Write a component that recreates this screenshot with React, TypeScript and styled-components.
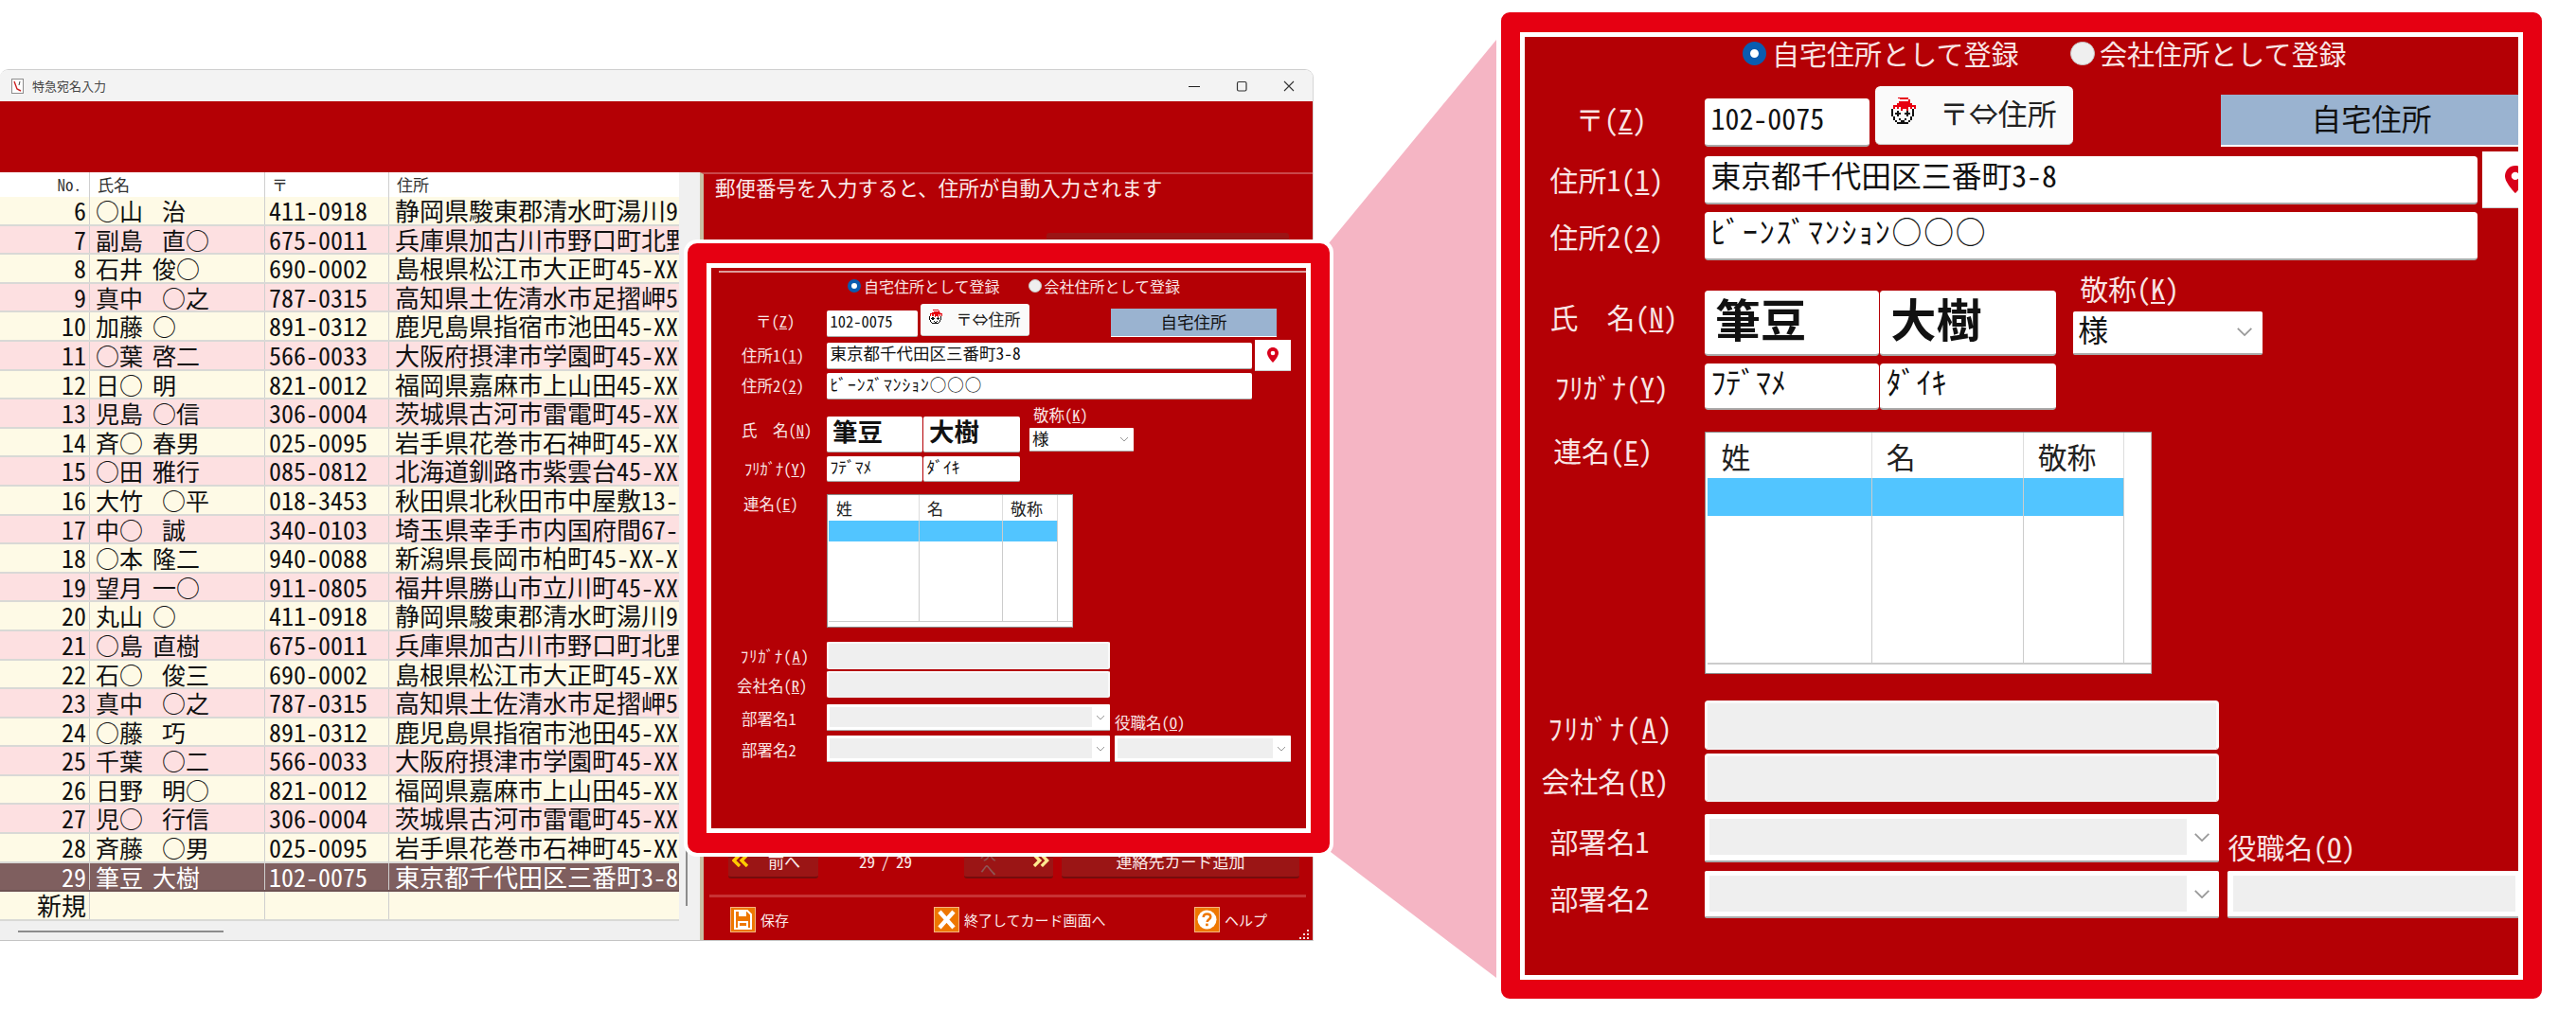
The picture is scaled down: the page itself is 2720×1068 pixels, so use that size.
import React from "react";
import styled, { createGlobalStyle } from "styled-components";

const u = (n: number) => `calc(var(--u) * ${n})`;

const Global = createGlobalStyle`
  html, body { margin: 0; padding: 0; background: #fff; }
  body { width: 2720px; height: 1068px; overflow: hidden; font-family: "Noto Sans CJK JP", "Noto Sans", sans-serif; font-feature-settings: "hwid" 1; }
  * { box-sizing: border-box; }
`;

const Page = styled.div`
  position: relative;
  width: 2720px;
  height: 1068px;
  padding-top: 73px;
`;

/* ---------- window ---------- */
const Window = styled.div`
  width: 1387px;
  height: 921px;
  display: flex;
  flex-direction: column;
  border-radius: 9px 9px 0 0;
  overflow: hidden;
  border-top: 1px solid #cfcfcf;
  border-right: 1px solid #d6d6d6;
  border-bottom: 1px solid #c4c4c4;
`;
const TitleBar = styled.div`
  height: 33px;
  flex: none;
  background: #f3f3f3;
  display: flex;
  align-items: center;
  padding-left: 12px;
`;
const TitleText = styled.span`
  margin-left: 9px;
  font-size: 13px;
  color: #444;
`;
const WinControls = styled.div`
  margin-left: auto;
  padding-right: 19px;
  display: flex;
  gap: 38px;
  align-items: center;
`;
const RedBand = styled.div`
  height: 75px;
  flex: none;
  background: #b40005;
`;
const Body = styled.div`
  flex: 1;
  min-height: 0;
  display: flex;
`;
const LeftPane = styled.div`
  width: 739px;
  flex: none;
  display: flex;
  flex-direction: column;
  background: #f0f0f0;
`;
const TableArea = styled.div`
  flex: 1;
  display: flex;
  min-height: 0;
`;
const TableBox = styled.div`
  width: 717px;
  flex: none;
  overflow: hidden;
  background: #fff;
  height: 791px;
`;
const gridCols = "94px 1px 184px 1px 130px 1px 306px";
const HeadRow = styled.div`
  display: grid;
  grid-template-columns: ${gridCols};
  height: 26px;
  background: #fff;
  font-size: 17px;
  color: #333;
  line-height: 26px;
`;
const Row = styled.div<{ $tone: "cream" | "pink" | "sel" }>`
  display: grid;
  grid-template-columns: ${gridCols};
  height: 30.6px;
  font-size: 26px;
  line-height: 28px;
  white-space: pre;
  overflow: hidden;
  color: ${(p) => (p.$tone === "sel" ? "#fff" : "#111")};
  background: ${(p) => (p.$tone === "cream" ? "#fefae6" : p.$tone === "pink" ? "#fde0e1" : "#7f5f5f")};
  border-bottom: 2px solid ${(p) => (p.$tone === "sel" ? "#6d5252" : "#d9d9d6")};
`;
const Sep = styled.div`
  background: #cfcfcf;
`;
const NoCell = styled.div<{ $head?: boolean }>`
  text-align: right;
  padding-right: ${(p) => (p.$head ? 8 : 3)}px;
`;
const NameCell = styled.div<{ $head?: boolean }>`
  padding-left: ${(p) => (p.$head ? 8 : 6)}px;
  font-size: ${(p) => (p.$head ? 17 : 25)}px;
  word-spacing: -0.1em;
  overflow: hidden;
`;
const ZipCell = styled.div<{ $head?: boolean }>`
  padding-left: ${(p) => (p.$head ? 7 : 4)}px;
`;
const AddrCell = styled.div<{ $head?: boolean }>`
  padding-left: ${(p) => (p.$head ? 8 : 6)}px;
  overflow: hidden;
`;
const VScroll = styled.div`
  flex: 1;
  display: flex;
  justify-content: center;
  align-items: flex-end;
  padding: 0 6px 16px 0;
`;
const VThumb = styled.div`
  width: 2px;
  height: 400px;
  background: #8c8c8c;
`;
const HScroll = styled.div`
  height: 20px;
  flex: none;
  padding: 10px 0 0 19px;
  background: #f0f0f0;
`;
const HThumb = styled.div`
  width: 217px;
  height: 2px;
  background: #8c8c8c;
`;

/* ---------- right panel ---------- */
const Panel = styled.div`
  flex: 1;
  position: relative;
  display: flex;
  flex-direction: column;
  background: #b40005;
  border-left: 4px solid #c9c0a4;
  border-top: 2px solid #c9474a;
`;
const HelpLine = styled.div`
  height: 29px;
  padding-left: 12px;
  flex: none;
  font-size: 21.5px;
  line-height: 27px;
  color: #fbeaea;
`;
const TopButton = styled.div`
  margin: 33px 0 0 362px;
  width: 256px;
  height: 36px;
  flex: none;
  background: #9b1515;
  border-radius: 3px;
`;
const Spacer = styled.div`
  flex: 1;
`;
const NavRow = styled.div`
  flex: none;
  height: 36px;
  display: grid;
  grid-template-columns: 95px 154px 94px 260px;
  padding-left: 26px;
  color: #fbeaea;
  font-size: 17px;
`;
const NavButton = styled.div<{ $wide?: boolean; $dim?: boolean }>`
  background: #9b1515;
  border-bottom: 2px solid #760c0c;
  border-radius: 3px;
  display: flex;
  align-items: center;
  justify-content: ${(p) => (p.$wide ? "center" : "flex-start")};
  gap: ${(p) => (p.$dim ? 22 : 20)}px;
  padding: 4px 4px 0 ${(p) => (p.$dim ? 17 : 4)}px;
  margin-left: ${(p) => (p.$wide ? 9 : 0)}px;
  width: ${(p) => (p.$wide ? "251px" : "auto")};
  color: ${(p) => (p.$dim ? "#8f5656" : "#fbeaea")};
  line-height: 1;
`;
const Counter = styled.div`
  display: flex;
  justify-content: center;
  padding: 13px 12px 0 0;
  line-height: 1;
  word-spacing: -0.1em;
`;
const PanelRule = styled.div`
  flex: none;
  height: 3px;
  margin: 21px 7px 0 6px;
  background: #c83234;
`;
const Footer = styled.div`
  flex: none;
  height: 45px;
  display: grid;
  grid-template-columns: 215px 275px auto;
  padding: 10px 0 0 28px;
  color: #fbeaea;
  font-size: 15px;
`;
const FootItem = styled.div`
  display: flex;
  align-items: center;
  gap: 5px;
  height: 27px;
`;
const Tile = styled.div`
  width: 27px;
  height: 27px;
  background: #ee7700;
  border: 1px solid #f6b483;
  display: flex;
  align-items: center;
  justify-content: center;
`;
const Grip = styled.svg`
  position: absolute;
  right: 3px;
  bottom: 1px;
`;

/* ---------- callouts ---------- */
const Ray = styled.svg`
  position: absolute;
  left: 0;
  top: 0;
`;
const Callout = styled.div<{ $big?: boolean }>`
  position: absolute;
  left: ${(p) => (p.$big ? 1580 : 722)}px;
  top: ${(p) => (p.$big ? 8 : 253)}px;
  width: ${(p) => (p.$big ? 1109 : 686)}px;
  height: ${(p) => (p.$big ? 1052 : 652)}px;
  background: #e60012;
  border: ${(p) => (p.$big ? 5 : 4.5)}px solid #fff;
  border-radius: 14px;
  display: flex;
  align-items: center;
  justify-content: center;
`;
const Frame = styled.div`
  border: 5px solid #fff;
  background: #b40005;
  flex: none;
`;
const Viewport = styled.div<{ $scale: number; $w: number; $h: number; $inset?: boolean }>`
  --u: ${(p) => p.$scale}px;
  width: ${(p) => p.$w}px;
  height: ${(p) => p.$h}px;
  overflow: hidden;
  padding: ${(p) => (p.$inset ? "3px 0 0 17.4px" : "0")};
  font-size: ${u(16)};
  color: #f9e4e4;
`;
const Groove = styled.div`
  height: ${u(2)};
  margin: 0 ${u(-40)} ${u(4)} ${u(-9.4)};
  background: #de9c9c;
`;
const FormContent = styled.div`
  width: ${u(600)};
  display: flex;
  flex-direction: column;
`;
const RadioRow = styled.div`
  height: ${u(20)};
  padding-left: ${u(126.6)};
  display: flex;
  align-items: center;
  line-height: 1;
`;
const Radio = styled.span<{ $on?: boolean }>`
  width: ${u(14)};
  height: ${u(14)};
  flex: none;
  border-radius: 50%;
  margin-right: ${u(3)};
  background: ${(p) => (p.$on ? "#fff" : "#efefef")};
  border: ${(p) => (p.$on ? u(4.5) : u(1))} solid ${(p) => (p.$on ? "#0a5cb0" : "#c9c9c9")};
`;
const RadioText = styled.span`
  margin-right: ${u(30)};
`;
const FormRow = styled.div<{ $mt: number; $align?: string }>`
  margin-top: ${(p) => u(p.$mt)};
  display: flex;
  align-items: ${(p) => p.$align ?? "center"};
`;
const Label = styled.div<{ $x: number; $shift?: number; $ls?: number }>`
  width: ${u(104.6)};
  flex: none;
  padding-left: ${(p) => u(p.$x)};
  padding-top: ${(p) => u(Math.max(0, (p.$shift ?? 2) * 2))};
  padding-bottom: ${(p) => u(Math.max(0, -(p.$shift ?? 2) * 2))};
  line-height: 1.2;
  white-space: nowrap;
  letter-spacing: ${(p) => u(p.$ls ?? 0)};
  font-size: ${u(16.5)};
`;
const Field = styled.div<{
  $w: number;
  $h?: number;
  $size?: number;
  $bold?: boolean;
  $disabled?: boolean;
  $ml?: number;
  $ls?: number;
}>`
  width: ${(p) => u(p.$w)};
  height: ${(p) => u(p.$h ?? 28)};
  flex: none;
  margin-left: ${(p) => u(p.$ml ?? 0)};
  background: ${(p) => (p.$disabled ? "#efefef" : "#fff")};
  border-radius: ${u(2)};
  border: ${(p) => (p.$disabled ? `${u(2)} solid #fafafa` : "none")};
  border-bottom: ${u(1.5)} solid ${(p) => (p.$disabled ? "#f2f2f2" : "#aaa")};
  color: #111;
  font-size: ${(p) => u(p.$size ?? 17.5)};
  font-weight: ${(p) => (p.$bold ? 700 : 400)};
  letter-spacing: ${(p) => u(p.$ls ?? 0)};
  padding: 0 0 ${(p) => u(p.$bold ? 6 : 4.5)} ${(p) => u(p.$bold ? 6 : 3.5)};
  display: flex;
  align-items: center;
  line-height: 1;
  white-space: nowrap;
  overflow: hidden;
`;
const ConvertButton = styled.div`
  width: ${u(115)};
  height: ${u(34)};
  flex: none;
  margin: 0 0 ${u(1)} ${u(3)};
  background: #fafafa;
  border-radius: ${u(3)};
  border-bottom: ${u(1)} solid #ccc;
  color: #222;
  font-size: ${u(17)};
  display: flex;
  align-items: center;
  padding: 0 0 ${u(2)} ${u(7)};
  gap: ${u(13)};
  line-height: 1;
`;
const Badge = styled.div`
  width: ${u(175)};
  height: ${u(30)};
  flex: none;
  margin-left: ${u(86)};
  background: #9ab3d0;
  border-bottom: ${u(1.5)} solid #fff;
  color: #111;
  font-size: ${u(17.5)};
  padding-bottom: ${u(2)};
  display: flex;
  align-items: center;
  justify-content: center;
  line-height: 1;
`;
const PinButton = styled.div`
  width: ${u(38)};
  height: ${u(33)};
  flex: none;
  margin-left: ${u(3)};
  background: #fff;
  border-bottom: ${u(1)} solid #ccc;
  display: flex;
  align-items: center;
  justify-content: center;
`;
const NameArea = styled.div`
  margin-top: ${u(6)};
  display: flex;
`;
const NameColumn = styled.div`
  padding-top: ${u(12)};
  display: flex;
  flex-direction: column;
  gap: ${u(4)};
`;
const HonorColumn = styled.div`
  margin-left: ${u(10)};
  display: flex;
  flex-direction: column;
`;
const SideLabel = styled.div<{ $pl?: number }>`
  height: ${u(24)};
  padding-left: ${(p) => u(p.$pl ?? 0)};
  line-height: ${u(20)};
  font-size: ${u(16.5)};
  white-space: nowrap;
`;
const Select = styled.div<{ $w: number; $h: number; $disabled?: boolean }>`
  width: ${(p) => u(p.$w)};
  height: ${(p) => u(p.$h)};
  flex: none;
  background: #fff;
  border-bottom: ${u(1.5)} solid #aaa;
  border-radius: ${u(1)};
  display: flex;
  align-items: center;
  padding: ${u(3)} ${u(5)} ${u(3)} ${u(3)};
  color: #111;
  font-size: ${u(17.5)};
  line-height: 1;
  gap: ${u(4)};
`;
const SelectValue = styled.div<{ $disabled?: boolean }>`
  flex: 1;
  align-self: stretch;
  display: flex;
  align-items: center;
  padding-bottom: ${u(3)};
  background: ${(p) => (p.$disabled ? "#efefef" : "transparent")};
`;
const Chevron = styled.svg`
  width: ${u(10)};
  height: ${u(6)};
  flex: none;
`;
const Mini = styled.div`
  width: ${u(260)};
  height: ${u(141)};
  flex: none;
  background: #fff;
  border: ${u(1)} solid #8a8a8a;
  border-right-color: #bbb;
  padding: 0 0 ${u(5)} ${u(1)};
  display: flex;
  flex-direction: column;
  color: #222;
  font-size: ${u(17)};
`;
const miniCols = `${u(96)} ${u(88)} ${u(58)} 1fr`;
const MiniHead = styled.div`
  height: ${u(26.5)};
  display: grid;
  grid-template-columns: ${miniCols};
  line-height: ${u(27)};
`;
const MiniHeadCell = styled.div<{ $pl: number }>`
  padding-left: ${(p) => u(p.$pl)};
  border-right: ${u(0.8)} solid #ddd;
  &:last-child { border-right: none; }
`;
const MiniBody = styled.div`
  flex: 1;
  display: grid;
  grid-template-columns: ${miniCols};
  grid-template-rows: ${u(22)} 1fr;
  border-bottom: ${u(1.5)} solid #ccc;
`;
const MiniCell = styled.div<{ $blue?: boolean; $end?: boolean }>`
  background: ${(p) => (p.$blue ? "#52c5ff" : "#fff")};
  border-right: ${(p) => (p.$end ? "none" : `${u(0.8)} solid #ccc`)};
`;
const DeptArea = styled.div`
  margin-top: ${u(7)};
  display: flex;
  align-items: flex-end;
`;
const DeptColumn = styled.div`
  display: flex;
  flex-direction: column;
  gap: ${u(5)};
`;
const TitleColumn = styled.div`
  margin-left: ${u(5)};
  display: flex;
  flex-direction: column;
`;

const people: [string, string, string, string][] = [
  ["6", "○山  治", "411-0918", "静岡県駿東郡清水町湯川9"],
  ["7", "副島  直○", "675-0011", "兵庫県加古川市野口町北野"],
  ["8", "石井 俊○", "690-0002", "島根県松江市大正町45-XX"],
  ["9", "真中  ○之", "787-0315", "高知県土佐清水市足摺岬5"],
  ["10", "加藤 ○", "891-0312", "鹿児島県指宿市池田45-XX"],
  ["11", "○葉 啓二", "566-0033", "大阪府摂津市学園町45-XX"],
  ["12", "日○ 明", "821-0012", "福岡県嘉麻市上山田45-XX"],
  ["13", "児島 ○信", "306-0004", "茨城県古河市雷電町45-XX"],
  ["14", "斉○ 春男", "025-0095", "岩手県花巻市石神町45-XX"],
  ["15", "○田 雅行", "085-0812", "北海道釧路市紫雲台45-XX"],
  ["16", "大竹  ○平", "018-3453", "秋田県北秋田市中屋敷13-"],
  ["17", "中○  誠", "340-0103", "埼玉県幸手市内国府間67-"],
  ["18", "○本 隆二", "940-0088", "新潟県長岡市柏町45-XX-X"],
  ["19", "望月 一○", "911-0805", "福井県勝山市立川町45-XX"],
  ["20", "丸山 ○", "411-0918", "静岡県駿東郡清水町湯川9"],
  ["21", "○島 直樹", "675-0011", "兵庫県加古川市野口町北野"],
  ["22", "石○  俊三", "690-0002", "島根県松江市大正町45-XX"],
  ["23", "真中  ○之", "787-0315", "高知県土佐清水市足摺岬5"],
  ["24", "○藤  巧", "891-0312", "鹿児島県指宿市池田45-XX"],
  ["25", "千葉  ○二", "566-0033", "大阪府摂津市学園町45-XX"],
  ["26", "日野  明○", "821-0012", "福岡県嘉麻市上山田45-XX"],
  ["27", "児○  行信", "306-0004", "茨城県古河市雷電町45-XX"],
  ["28", "斉藤  ○男", "025-0095", "岩手県花巻市石神町45-XX"],
  ["29", "筆豆 大樹", "102-0075", "東京都千代田区三番町3-8"],
  ["新規", "", "", ""],
];

const ChevronIcon = () => (
  <Chevron viewBox="0 0 10 6">
    <path d="M1 1l4 4 4-4" fill="none" stroke="#999" strokeWidth="1" />
  </Chevron>
);

const FaceSvg = styled.svg`
  width: ${u(17.5)};
  height: ${u(18.5)};
  flex: none;
`;
const FaceIcon = () => (
  <FaceSvg viewBox="0 0 16 17" shapeRendering="crispEdges">
    <path
      fill="#e8000f"
      d="M5 0h6v1h1v2h1v1h2v2h-1v-1h-1v1h-1v-1h-1v2h-1v-1h-2v1h-1v-2h-1v1h-1v-1h-1v1h-1v-2h2v-1h1v-2h1z"
    />
    <path fill="#fff" d="M5 1h6v1h-6z" />
    <path
      fill="#111"
      d="M2 6h1v4h-1zM13 6h1v4h-1zM3 10h1v2h-1zM12 10h1v2h-1zM4 12h1v1h-1zM11 12h1v1h-1zM5 13h6v1h-6zM5 7h1v1h1v1h-1v1h-1v-1h-1v-1h1zM10 7h1v1h1v1h-1v1h-1v-1h-1v-1h1zM6 11h1v1h2v-1h1v1h-1v1h-2v-1h-1z"
    />
  </FaceSvg>
);
const PinSvg = styled.svg`
  width: ${u(12)};
  height: ${u(16)};
`;
const PinIcon = () => (
  <PinSvg viewBox="0 0 12 16">
    <path fill="#d9001b" d="M6 0C2.7 0 0 2.7 0 6c0 4 6 10 6 10s6-6 6-10c0-3.3-2.7-6-6-6z" />
    <circle cx="6" cy="6" r="2.3" fill="#fff" />
  </PinSvg>
);

const AddressForm: React.FC<{ big?: boolean }> = ({ big }) => (
  <Viewport $scale={big ? 1.817 : 1} $w={big ? 1049 : 628} $h={big ? 991 : 592} $inset={!big}>
    {!big && <Groove />}
    <FormContent>
      <RadioRow>
        <Radio $on />
        <RadioText>自宅住所として登録</RadioText>
        <Radio />
        <RadioText>会社住所として登録</RadioText>
      </RadioRow>

      <FormRow $mt={9} $align="flex-end">
        <Label $x={29.6} $shift={-3}>
          〒(<u>Z</u>)
        </Label>
        <Field $w={96} $size={16.5}>
          102-0075
        </Field>
        <ConvertButton>
          <FaceIcon />
          <span>〒⇔住所</span>
        </ConvertButton>
        <Badge>自宅住所</Badge>
      </FormRow>

      <FormRow $mt={3}>
        <Label $x={14.6} $shift={0}>
          住所1(<u>1</u>)
        </Label>
        <Field $w={449}>東京都千代田区三番町3-8</Field>
        <PinButton>
          <PinIcon />
        </PinButton>
      </FormRow>

      <FormRow $mt={2}>
        <Label $x={14.6} $shift={0.3}>
          住所2(<u>2</u>)
        </Label>
        <Field $w={449} $ls={1}>
          ﾋﾞｰﾝｽﾞﾏﾝｼｮﾝ○○○
        </Field>
      </FormRow>

      <NameArea>
        <NameColumn>
          <FormRow $mt={0}>
            <Label $x={14.6} $shift={-3.7}>
              氏&nbsp;&nbsp;名(<u>N</u>)
            </Label>
            <Field $w={101} $h={38} $size={26.5} $bold>
              筆豆
            </Field>
            <Field $w={102} $h={38} $size={26.5} $bold $ml={1}>
              大樹
            </Field>
          </FormRow>
          <FormRow $mt={0}>
            <Label $x={17.6} $shift={0.3}>
              ﾌﾘｶﾞﾅ(<u>Y</u>)
            </Label>
            <Field $w={101} $h={27}>
              ﾌﾃﾞﾏﾒ
            </Field>
            <Field $w={102} $h={27} $ml={1}>
              ﾀﾞｲｷ
            </Field>
          </FormRow>
        </NameColumn>
        <HonorColumn>
          <SideLabel $pl={4}>
            敬称(<u>K</u>)
          </SideLabel>
          <Select $w={110} $h={25}>
            <SelectValue>様</SelectValue>
            <ChevronIcon />
          </Select>
        </HonorColumn>
      </NameArea>

      <FormRow $mt={13} $align="flex-start">
        <Label $x={16.6} $shift={0.5}>
          連名(<u>E</u>)
        </Label>
        <Mini>
          <MiniHead>
            <MiniHeadCell $pl={8}>姓</MiniHeadCell>
            <MiniHeadCell $pl={8}>名</MiniHeadCell>
            <MiniHeadCell $pl={8}>敬称</MiniHeadCell>
            <MiniHeadCell $pl={0} />
          </MiniHead>
          <MiniBody>
            <MiniCell $blue />
            <MiniCell $blue />
            <MiniCell $blue />
            <MiniCell $end />
            <MiniCell />
            <MiniCell />
            <MiniCell />
            <MiniCell $end />
          </MiniBody>
        </Mini>
      </FormRow>

      <FormRow $mt={15}>
        <Label $x={13.6} $shift={1.5} $ls={1}>
          ﾌﾘｶﾞﾅ(<u>A</u>)
        </Label>
        <Field $w={299} $h={29} $disabled />
      </FormRow>
      <FormRow $mt={2}>
        <Label $x={9.6}>
          会社名(<u>R</u>)
        </Label>
        <Field $w={299} $disabled />
      </FormRow>

      <DeptArea>
        <DeptColumn>
          <FormRow $mt={0}>
            <Label $x={14.6}>部署名1</Label>
            <Select $w={299} $h={28} $disabled>
              <SelectValue $disabled />
              <ChevronIcon />
            </Select>
          </FormRow>
          <FormRow $mt={0}>
            <Label $x={14.6}>部署名2</Label>
            <Select $w={299} $h={28} $disabled>
              <SelectValue $disabled />
              <ChevronIcon />
            </Select>
          </FormRow>
        </DeptColumn>
        <TitleColumn>
          <SideLabel>
            役職名(<u>O</u>)
          </SideLabel>
          <Select $w={186} $h={28} $disabled>
            <SelectValue $disabled />
            <ChevronIcon />
          </Select>
        </TitleColumn>
      </DeptArea>
    </FormContent>
  </Viewport>
);

const DoubleChevron: React.FC<{ dir: "l" | "r"; color: string }> = ({ dir, color }) => (
  <svg width="18" height="14" viewBox="0 0 18 14">
    <path
      d={dir === "l" ? "M8 1L2 7l6 6M16 1l-6 6 6 6" : "M2 1l6 6-6 6M10 1l6 6-6 6"}
      fill="none"
      stroke={color}
      strokeWidth="3.4"
    />
  </svg>
);

export default function App() {
  return (
    <>
      <Global />
      <Page>
        <Window>
          <TitleBar>
            <svg width="13" height="16" viewBox="0 0 13 16">
              <rect x="0.5" y="0.5" width="12" height="15" fill="#fff" stroke="#8d8d8d" />
              <path d="M3 3l3 8 4 2" fill="none" stroke="#cc2222" strokeWidth="1.4" />
              <path d="M9 3l-1 4" fill="none" stroke="#444" />
            </svg>
            <TitleText>特急宛名入力</TitleText>
            <WinControls>
              <svg width="12" height="12" viewBox="0 0 12 12">
                <path d="M0 6.5h12" stroke="#222" strokeWidth="1" />
              </svg>
              <svg width="12" height="12" viewBox="0 0 12 12">
                <rect x="1.5" y="1.5" width="9.5" height="9.5" rx="1.5" fill="none" stroke="#333" strokeWidth="1.2" />
              </svg>
              <svg width="12" height="12" viewBox="0 0 12 12">
                <path d="M1 1l10 10M11 1L1 11" stroke="#333" strokeWidth="1.1" />
              </svg>
            </WinControls>
          </TitleBar>
          <RedBand />
          <Body>
            <LeftPane>
              <TableArea>
                <TableBox>
                  <HeadRow>
                    <NoCell $head>No.</NoCell>
                    <Sep />
                    <NameCell $head>氏名</NameCell>
                    <Sep />
                    <ZipCell $head>〒</ZipCell>
                    <Sep />
                    <AddrCell $head>住所</AddrCell>
                  </HeadRow>
                  {people.map(([no, name, zip, addr], i) => (
                    <Row key={no} $tone={no === "29" ? "sel" : i % 2 === 0 ? "cream" : "pink"}>
                      <NoCell>{no}</NoCell>
                      <Sep />
                      <NameCell>{name}</NameCell>
                      <Sep />
                      <ZipCell>{zip}</ZipCell>
                      <Sep />
                      <AddrCell>{addr}</AddrCell>
                    </Row>
                  ))}
                </TableBox>
                <VScroll>
                  <VThumb />
                </VScroll>
              </TableArea>
              <HScroll>
                <HThumb />
              </HScroll>
            </LeftPane>
            <Panel>
              <HelpLine>郵便番号を入力すると、住所が自動入力されます</HelpLine>
              <TopButton />
              <Spacer />
              <NavRow>
                <NavButton>
                  <DoubleChevron dir="l" color="#ffcc00" />
                  <span>前へ</span>
                </NavButton>
                <Counter>29 / 29</Counter>
                <NavButton $dim>
                  <span>次へ</span>
                  <DoubleChevron dir="r" color="#ffe98f" />
                </NavButton>
                <NavButton $wide>連絡先カード追加</NavButton>
              </NavRow>
              <PanelRule />
              <Footer>
                <FootItem>
                  <Tile>
                    <svg width="19" height="21" viewBox="0 0 19 21">
                      <path d="M1 1h13l4 4v15H1z" fill="none" stroke="#fff" strokeWidth="2" />
                      <path d="M5 2h8v5H5zM4 12h11v7H4z" fill="#fff" />
                      <path d="M6 14h7v3H6z" fill="#ee7700" />
                    </svg>
                  </Tile>
                  <span>保存</span>
                </FootItem>
                <FootItem>
                  <Tile>
                    <svg width="19" height="21" viewBox="0 0 19 21">
                      <path d="M2 2l15 17M17 2L2 19" stroke="#fff" strokeWidth="4.4" />
                    </svg>
                  </Tile>
                  <span>終了してカード画面へ</span>
                </FootItem>
                <FootItem>
                  <Tile>
                    <svg width="21" height="21" viewBox="0 0 21 21">
                      <circle cx="10.5" cy="10.5" r="10" fill="#fff" />
                      <path
                        d="M6.7 8c0-2.4 1.7-3.6 3.8-3.6s3.8 1.2 3.8 3.2c0 2.6-3.6 2.8-3.6 5.4"
                        fill="none"
                        stroke="#ee7700"
                        strokeWidth="2.5"
                      />
                      <rect x="9.1" y="14.6" width="2.6" height="2.6" fill="#ee7700" />
                    </svg>
                  </Tile>
                  <span>ヘルプ</span>
                </FootItem>
              </Footer>
              <Grip width="11" height="10" viewBox="0 0 11 10">
                <path fill="#f1dada" d="M8 0h2v2H8zM4 4h2v2H4zM8 4h2v2H8zM0 8h2v2H0zM4 8h2v2H4zM8 8h2v2H8z" />
              </Grip>
            </Panel>
          </Body>
        </Window>

        <Ray width="2720" height="1068" viewBox="0 0 2720 1068">
          <polygon points="1580,42 1580,1033 1405,900 1403,257" fill="#f5b5c4" />
        </Ray>

        <Callout>
          <Frame>
            <AddressForm />
          </Frame>
        </Callout>
        <Callout $big>
          <Frame>
            <AddressForm big />
          </Frame>
        </Callout>
      </Page>
    </>
  );
}
